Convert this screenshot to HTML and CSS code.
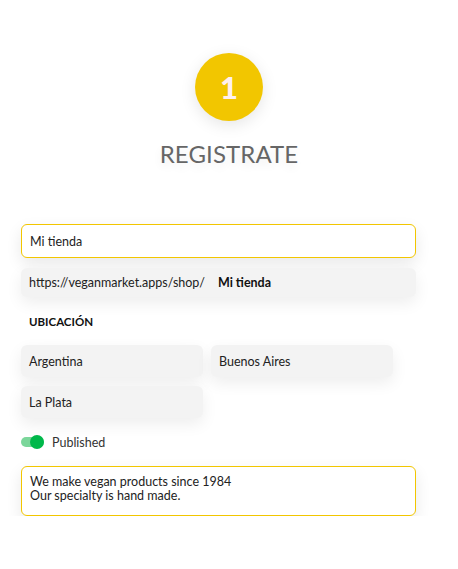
FILE: index.html
```html
<!DOCTYPE html>
<html lang="es">
<head>
<meta charset="utf-8">
<title>Registrate</title>
<link rel="stylesheet" href="styles.css">
</head>
<body>
<main class="page">
  <header class="hero">
    <div class="step"><span class="step-num">1</span></div>
    <h1 class="title">REGISTRATE</h1>
  </header>
  <form class="form">
    <div class="field field-input">Mi tienda</div>
    <div class="field field-url">https://veganmarket.apps/shop/<b class="url-slug">Mi tienda</b></div>
    <div class="label">UBICACIÓN</div>
    <div class="loc-grid">
      <div class="field field-loc">Argentina</div>
      <div class="field field-loc">Buenos Aires</div>
      <div class="field field-loc">La Plata</div>
    </div>
    <div class="toggle-row">
      <span class="toggle"><span class="toggle-knob"></span></span>
      <span class="toggle-label">Published</span>
    </div>
    <div class="field field-text">We make vegan products since 1984<br>Our specialty is hand made.</div>
  </form>
</main>
</body>
</html>
```

FILE: styles.css
```css
* { box-sizing: border-box; }
html, body { margin: 0; padding: 0; background: #fff; }
body {
  font-family: "Lato", "Liberation Sans", sans-serif;
  color: #222;
  font-size: 12.5px;
}
.page {
  width: 458px;
  padding-top: 53px;
}
.hero {
  display: flex;
  flex-direction: column;
  align-items: center;
}
.step {
  width: 68px;
  height: 68px;
  border-radius: 50%;
  background: #f2c600;
  box-shadow: 0 4px 16px rgba(0,0,0,0.10);
  display: flex;
  align-items: center;
  justify-content: center;
}
.step-num {
  font-family: "Lato", sans-serif;
  font-weight: 900;
  font-size: 31px;
  color: #fff0f0;
  line-height: 1;
}
.title {
  margin: 18px 0 0;
  font-weight: 400;
  font-size: 24px;
  letter-spacing: 0.1px;
  color: #666;
  line-height: 30px;
  text-shadow: 0 4px 10px rgba(0,0,0,0.08);
}
.form {
  width: 395px;
  margin-left: 21px;
  margin-top: 55px;
  display: flex;
  flex-direction: column;
}
.field {
  border-radius: 6px;
  padding: 0 8px;
  display: flex;
  align-items: center;
  color: #222;
}
.field-input {
  height: 34px;
  border: 1px solid #f2c600;
  background: #fff;
  box-shadow: 0 6px 16px rgba(0,0,0,0.09);
}
.field-url {
  margin-top: 10px;
  height: 29px;
  background: #f3f3f3;
  box-shadow: 0 6px 16px rgba(0,0,0,0.07);
  white-space: pre;
}
.url-slug {
  font-weight: 700;
  color: #111;
  margin-left: 13px;
}
.label {
  margin-top: 18px;
  font-weight: 700;
  font-size: 11.5px;
  color: #111;
  padding-left: 8px;
  line-height: 14px;
}
.loc-grid {
  margin-top: 16px;
  display: grid;
  grid-template-columns: 182px 182px;
  gap: 9px 8px;
}
.field-loc {
  height: 32px;
  background: #f3f3f3;
  box-shadow: 0 6px 16px rgba(0,0,0,0.07);
}
.toggle-row {
  margin-top: 16px;
  display: flex;
  align-items: center;
  height: 16px;
}
.toggle {
  position: relative;
  width: 23px;
  height: 10px;
  border-radius: 5px;
  background: #7bd69a;
}
.toggle-knob {
  position: absolute;
  right: 0;
  top: -2px;
  width: 14px;
  height: 14px;
  border-radius: 50%;
  background: #00b84a;
}
.toggle-label {
  margin-left: 8px;
  color: #333;
}
.field-text {
  margin-top: 16px;
  height: 50px;
  border: 1px solid #f2c600;
  background: #fff;
  box-shadow: 0 6px 16px rgba(0,0,0,0.09);
  align-items: flex-start;
  padding-top: 8px;
  line-height: 14px;
}
```
